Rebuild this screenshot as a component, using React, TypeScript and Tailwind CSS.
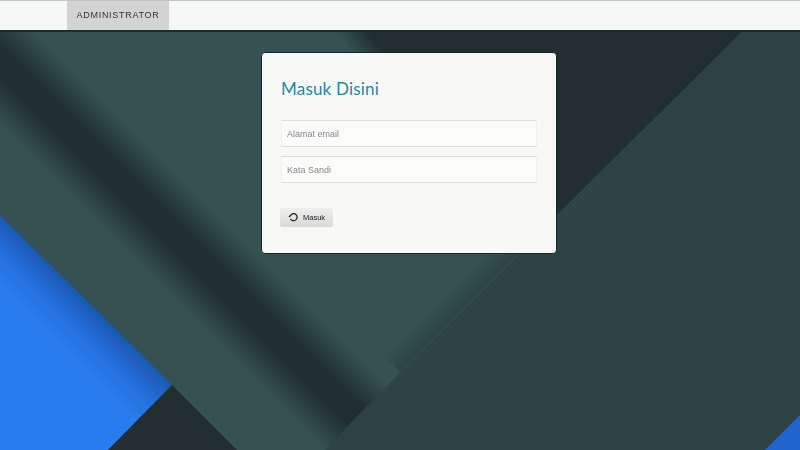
const sans = "font-['Liberation_Sans',Arial,sans-serif]"

function Background() {
  return (
    <svg className="absolute inset-0" width="800" height="450" viewBox="0 0 800 450">
      <defs>
        <linearGradient id="band" gradientUnits="userSpaceOnUse" x1="132.5" y1="129.5" x2="67.5" y2="194.5">
          <stop offset="0" stopColor="#212e31" stopOpacity="0" />
          <stop offset="0.38" stopColor="#212e31" />
          <stop offset="0.6" stopColor="#212e31" />
          <stop offset="1" stopColor="#212e31" stopOpacity="0" />
        </linearGradient>
        <linearGradient id="blue" gradientUnits="userSpaceOnUse" x1="86" y1="300" x2="50" y2="336">
          <stop offset="0" stopColor="#1c58b4" />
          <stop offset="0.5" stopColor="#2470dc" />
          <stop offset="1" stopColor="#2a7bed" />
        </linearGradient>
        <linearGradient id="top" gradientUnits="userSpaceOnUse" x1="358" y1="60" x2="378" y2="44">
          <stop offset="0" stopColor="#222e30" stopOpacity="0" />
          <stop offset="1" stopColor="#222e30" />
        </linearGradient>
        <linearGradient id="edge" gradientUnits="userSpaceOnUse" x1="460" y1="312" x2="444" y2="296">
          <stop offset="0" stopColor="#1f3134" stopOpacity="0.45" />
          <stop offset="1" stopColor="#1f3134" stopOpacity="0" />
        </linearGradient>
      </defs>
      <rect width="800" height="450" fill="#355154" />
      <polygon points="-60,-65 500,495 500,625 -60,65" fill="url(#band)" />
      <polygon points="330,32 742,32 540,232 430,150" fill="url(#top)" />
      <polygon points="560,212 400,372 384,356 544,196" fill="url(#edge)" />
      <polygon points="742,32 800,32 800,450 325,450 373,400" fill="#2d4346" />
      <polygon points="0,215 172,385 108,450 0,450" fill="url(#blue)" />
      <polygon points="172,385 108,450 237,450" fill="#222e30" />
      <polygon points="800,415 765,450 800,450" fill="#2166cf" />
    </svg>
  )
}

function Field({ placeholder }: { placeholder: string }) {
  return (
    <input
      placeholder={placeholder}
      className="h-[27px] w-[256px] border-y border-y-[#dcdcda] border-x border-x-[#f0f0ee] bg-[#fbfbfa] px-[5px] text-[9px] outline-none placeholder:text-[#888] blur-[0.5px]"
    />
  )
}

export default function App() {
  return (
    <div className={`relative h-[450px] w-[800px] overflow-hidden ${sans}`}>
      <Background />

      <header className="relative flex h-[32px] border-t border-t-[#c4c4c4] border-b-2 border-b-[#1e2b2d] bg-[#f6f7f7] pl-[67px]">
        <a className="flex h-full w-[102px] items-center justify-center bg-[#d3d4d2] text-[9px] tracking-[0.7px] text-[#333] blur-[0.5px]">
          ADMINISTRATOR
        </a>
      </header>

      <main className="relative pl-[261px] pt-[20px]">
        <div className="flex h-[202px] w-[296px] flex-col rounded-[4px] border border-[#12292c] bg-[#f8f8f7] pl-[19px]">
          <h1 className="mt-[25px] font-['Lato',sans-serif] text-[17px] leading-[21px] tracking-[0.2px] text-[#1f88a6]">Masuk Disini</h1>
          <form className="mt-[21px] flex flex-col gap-[9px]">
            <Field placeholder="Alamat email" />
            <Field placeholder="Kata Sandi" />
          </form>
          <button className="-ml-px mt-[25px] flex h-[19px] w-[53px] items-center gap-[4px] rounded-[2px] bg-gradient-to-b from-[#efefee] to-[#d9d9d8] pl-[8px] text-[7.5px] text-[#222]">
            <svg width="11" height="9" viewBox="0 0 11 9" fill="none" stroke="#222" strokeWidth="1.2">
              <path d="M1 4 L4 1 A3.5 3.5 0 1 1 3.5 7 L2.5 6" />
            </svg>
            <span className="blur-[0.3px]">Masuk</span>
          </button>
        </div>
      </main>
    </div>
  )
}
